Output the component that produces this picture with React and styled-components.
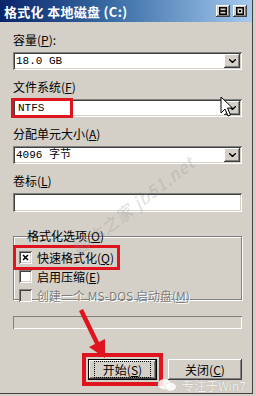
import React from "react"
import styled, { createGlobalStyle } from "styled-components"

const Global = createGlobalStyle`
  html, body {
    margin: 0;
    padding: 0;
    background: #d4d0c8;
  }
  body {
    font-family: "Noto Sans CJK SC", "DejaVu Sans", sans-serif;
    font-size: 12px;
    color: #000;
  }
`

const raised = `
  box-shadow: inset -1px -1px #404040, inset 1px 1px #ffffff,
    inset -2px -2px #808080, inset 2px 2px #d4d0c8;
`
const sunken = `
  box-shadow: inset 1px 1px #808080, inset -1px -1px #ffffff,
    inset 2px 2px #404040, inset -2px -2px #d4d0c8;
`

const Window = styled.div`
  position: relative;
  width: 252px;
  height: 393px;
  background: #d4d0c8;
  border-right: 1px solid #404040;
  border-bottom: 1px solid #404040;
  overflow: hidden;
`

const TitleBar = styled.div`
  height: 22px;
  display: flex;
  align-items: center;
  justify-content: space-between;
  padding: 0 5px 0 4px;
  background: linear-gradient(to right, #0a246a 0%, #3a6ea5 45%, #a6caf0 100%);
`

const Title = styled.span`
  color: #fff;
  font-weight: bold;
  font-size: 13px;
  letter-spacing: 0.3px;
  white-space: nowrap;
`

const TitleButtons = styled.div`
  display: flex;
  gap: 3px;
`

const TitleButton = styled.div`
  width: 14px;
  height: 12px;
  background: #d4d0c8;
  display: flex;
  align-items: center;
  justify-content: center;
  ${raised}
`

const Content = styled.div`
  padding: 11px 0 0 13px;
  width: 229px;
  display: flex;
  flex-direction: column;
`

const Field = styled.div`
  display: flex;
  flex-direction: column;
  gap: 5px;
  margin-bottom: 10px;
`

const Label = styled.div`
  height: 14px;
  line-height: 14px;
  white-space: nowrap;
`

const Combo = styled.div`
  position: relative;
  height: 18px;
  background: #fff;
  display: flex;
  align-items: center;
  padding: 0 2px 0 3px;
  ${sunken}
`

const Value = styled.span`
  flex: 1;
  line-height: 14px;
  font-family: "Liberation Mono", "Noto Sans CJK SC", monospace;
  font-size: 11px;
  white-space: nowrap;
`

const Marked = styled.span`
  display: inline-block;
  width: 52px;
  height: 14px;
  margin-left: -5px;
  padding-left: 4px;
  border: 3px solid #e0141e;
  line-height: 14px;
  font-family: "Liberation Mono", monospace;
  font-size: 11px;
`

const DropButton = styled.div`
  width: 16px;
  height: 14px;
  background: #d4d0c8;
  display: flex;
  align-items: center;
  justify-content: center;
  ${raised}
`

const TextBox = styled.div`
  height: 19px;
  background: #fff;
  ${sunken}
`

const Group = styled.fieldset`
  margin: 7px 0 0 0;
  padding: 8px 0 0 6px;
  height: 63px;
  border: none;
  box-shadow: inset 1px 1px #808080, inset -1px -1px #808080,
    inset 2px 2px #fff, 1px 1px #fff;
  display: flex;
  flex-direction: column;
  gap: 6px;
  position: relative;
`

const Legend = styled.legend`
  padding: 0 2px;
  margin-left: 6px;
  font-size: 12px;
  line-height: 14px;
`

const CheckRow = styled.div`
  display: flex;
  align-items: center;
  gap: 5px;
  width: fit-content;
  height: 13px;
  outline: ${p => (p.$highlight ? "3px solid #e0141e" : "none")};
  outline-offset: 3px;
  color: ${p => (p.$disabled ? "#808080" : "#000")};
  text-shadow: ${p => (p.$disabled ? "1px 1px #fff" : "none")};
  white-space: nowrap;
`

const Box = styled.div`
  width: 13px;
  height: 13px;
  flex: none;
  background: ${p => (p.$disabled ? "#d4d0c8" : "#fff")};
  display: flex;
  align-items: center;
  justify-content: center;
  box-shadow: inset 1px 1px #808080, inset -1px -1px #ffffff,
    inset 2px 2px #404040, inset -2px -2px #d4d0c8;
`

const Progress = styled.div`
  margin-top: 16px;
  height: 13px;
  box-shadow: inset 1px 1px #808080, inset -1px -1px #ffffff;
`

const Buttons = styled.div`
  margin-top: 30px;
  display: flex;
  justify-content: flex-end;
  gap: 11px;
`

const Button = styled.div`
  width: ${p => p.$w}px;
  height: 21px;
  display: flex;
  align-items: center;
  justify-content: center;
  line-height: 13px;
  position: relative;
  background: #d4d0c8;
  ${p =>
    p.$default
      ? `box-shadow: inset 0 0 0 1px #000, inset -2px -2px #404040, inset 2px 2px #fff, inset -3px -3px #808080;
         outline: 4px solid #e0141e; outline-offset: 2px;`
      : raised}
`

const Focus = styled.span`
  padding: 1px 8px;
  border: 1px dotted #000;
  line-height: 13px;
`

const Overlay = styled.svg`
  position: absolute;
  pointer-events: none;
`

const Watermark = styled.div`
  position: absolute;
  left: 68px;
  top: 244px;
  transform: rotate(-38deg);
  transform-origin: left top;
  font-size: 17px;
  line-height: 20px;
  font-style: italic;
  letter-spacing: 1px;
  color: rgba(140, 140, 140, 0.3);
  white-space: nowrap;
`

const Stamp = styled.div`
  position: absolute;
  left: 156px;
  top: 378px;
  display: flex;
  align-items: center;
  gap: 4px;
  color: rgba(255, 255, 255, 0.85);
  text-shadow: 0 0 1px rgba(120, 120, 120, 0.6);
  font-size: 12px;
  line-height: 13px;
  white-space: nowrap;
`

const Chevron = () => (
  <svg width="7" height="4" viewBox="0 0 7 4">
    <path d="M0 0 L3.5 3.5 L7 0" stroke="#000" strokeWidth="1.4" fill="none" />
  </svg>
)

function ComboBox({ children }) {
  return (
    <Combo>
      <Value>{children}</Value>
      <DropButton>
        <Chevron />
      </DropButton>
    </Combo>
  )
}

export default function App() {
  return (
    <Window>
      <Global />
      <TitleBar>
        <Title>格式化 本地磁盘 (C:)</Title>
        <TitleButtons>
          <TitleButton>
            <svg width="8" height="8" viewBox="0 0 8 8">
              <rect x="0.75" y="0.75" width="6.5" height="6.5" fill="none" stroke="#000" strokeWidth="1.5" />
              <rect x="1" y="3.2" width="6" height="1.6" fill="#000" />
            </svg>
          </TitleButton>
          <TitleButton>
            <svg width="8" height="8" viewBox="0 0 8 8">
              <rect x="0.75" y="0.75" width="6.5" height="6.5" fill="none" stroke="#000" strokeWidth="1.5" />
              <rect x="3" y="3" width="2" height="2" fill="#000" />
            </svg>
          </TitleButton>
        </TitleButtons>
      </TitleBar>

      <Content>
        <Field>
          <Label>
            容量(<u>P</u>):
          </Label>
          <ComboBox>18.0 GB</ComboBox>
        </Field>
        <Field>
          <Label>
            文件系统(<u>F</u>)
          </Label>
          <ComboBox>
            <Marked>NTFS</Marked>
          </ComboBox>
        </Field>
        <Field>
          <Label>
            分配单元大小(<u>A</u>)
          </Label>
          <ComboBox>4096 字节</ComboBox>
        </Field>
        <Field>
          <Label>
            卷标(<u>L</u>)
          </Label>
          <TextBox />
        </Field>

        <Group>
          <Legend>
            格式化选项(<u>O</u>)
          </Legend>
          <CheckRow $highlight>
            <Box>
              <svg width="7" height="7" viewBox="0 0 7 7">
                <path d="M1 1 L6 6 M6 1 L1 6" stroke="#000" strokeWidth="1.6" />
              </svg>
            </Box>
            <span>
              快速格式化(<u>Q</u>)
            </span>
          </CheckRow>
          <CheckRow>
            <Box />
            <span>
              启用压缩(<u>E</u>)
            </span>
          </CheckRow>
          <CheckRow $disabled>
            <Box $disabled />
            <span>
              创建一个 MS-DOS 启动盘(<u>M</u>)
            </span>
          </CheckRow>
        </Group>

        <Progress />

        <Buttons>
          <Button $w={69} $default>
            <Focus>
              开始(<u>S</u>)
            </Focus>
          </Button>
          <Button $w={74}>
            关闭(<u>C</u>)
          </Button>
        </Buttons>
      </Content>

      <Watermark>脚本之家 jb51.net</Watermark>

      <Stamp>
        <svg width="22" height="14" viewBox="0 0 22 16">
          <ellipse cx="8" cy="7" rx="7.5" ry="6" fill="rgba(255,255,255,0.85)" />
          <ellipse cx="15" cy="10" rx="6.5" ry="5" fill="rgba(255,255,255,0.85)" stroke="rgba(200,200,200,0.8)" strokeWidth="0.6" />
        </svg>
        <span>专注于Win7</span>
      </Stamp>

      <Overlay width="40" height="52" viewBox="0 0 40 52" style={{ left: 74, top: 308 }}>
        <path d="M5 3 L21 36 L15 39 L31 50 L31 31 L25 34 L9 1 Z" fill="#e0141e" />
      </Overlay>

      <Overlay width="14" height="22" viewBox="0 0 14 22" style={{ left: 220, top: 96 }}>
        <path
          d="M1 1 L1 17 L5 13 L8 20 L10.5 19 L7.5 12 L12.5 12 Z"
          fill="#fff"
          stroke="#000"
          strokeWidth="1"
          strokeLinejoin="round"
        />
      </Overlay>
    </Window>
  )
}
